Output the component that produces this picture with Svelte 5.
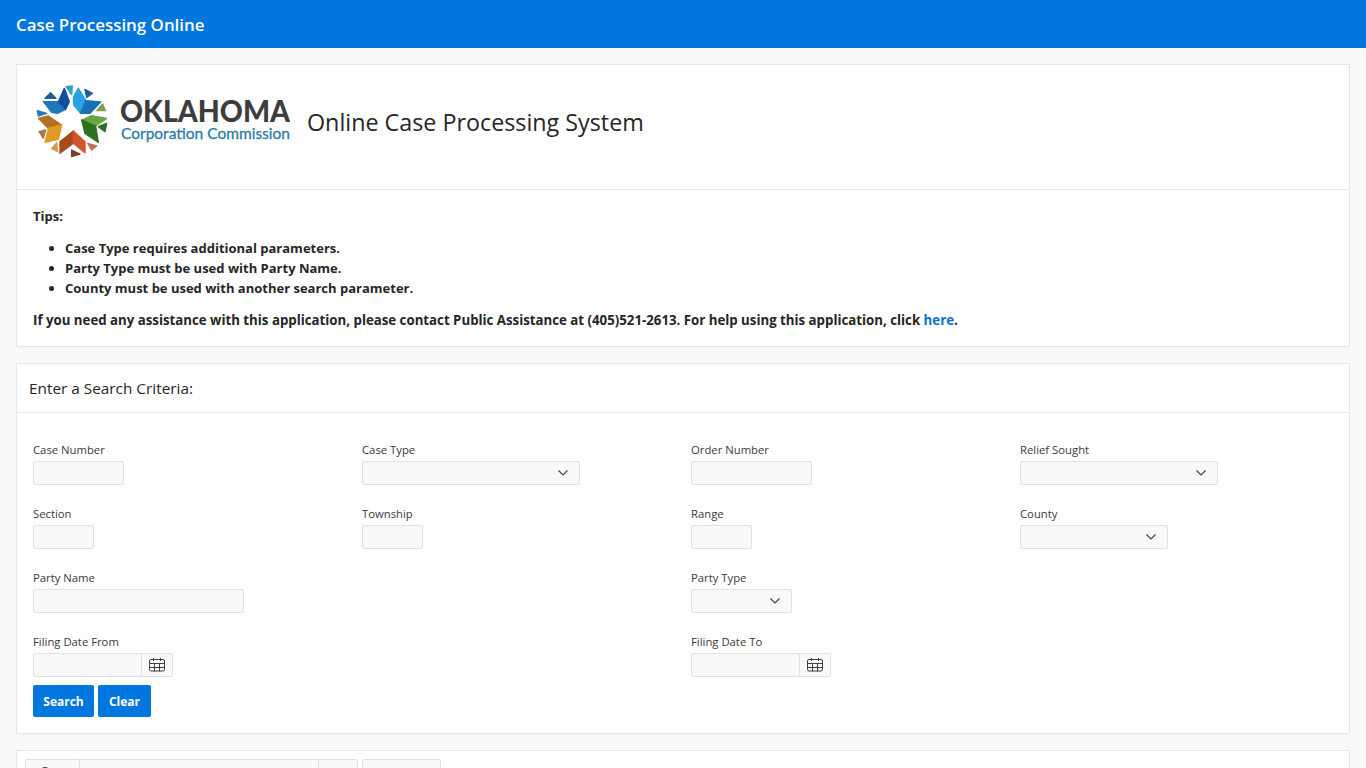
<script>
    const row1 = [
        { label: 'Case Number', kind: 'input', width: 91 },
        { label: 'Case Type', kind: 'select', width: 218 },
        { label: 'Order Number', kind: 'input', width: 121 },
        { label: 'Relief Sought', kind: 'select', width: 198 }
    ];
    const row2 = [
        { label: 'Section', kind: 'input', width: 61 },
        { label: 'Township', kind: 'input', width: 61 },
        { label: 'Range', kind: 'input', width: 61 },
        { label: 'County', kind: 'select', width: 148 }
    ];
    const fields = [...row1, ...row2];

    const logoPieces = [
        ['108,20 127,18 125,44', '#2f9fd0'],
        ['45,55 62,38 78,55', '#1c5e96'],
        ['40,65 85,65 107,88 82,100 65,97', '#1f78bb'],
        ['85,65 103,25 118,65 107,88', '#0f4f9e'],
        ['130,52 145,25 168,62 152,100 131,75', '#27a3e0'],
        ['168,62 212,66 180,100 152,100', '#1a6fb5'],
        ['165,28 187,40 170,52', '#1c5e96'],
        ['200,92 218,72 226,92', '#7f9f50'],
        ['155,120 185,107 230,115 197,138', '#6aa544'],
        ['155,120 197,138 205,187 165,160', '#2e7020'],
        ['205,140 230,130 225,155', '#2f6b28'],
        ['22,92 50,100 25,108', '#2a7ab5'],
        ['25,115 55,108 95,135 55,145', '#b0702a'],
        ['55,145 95,135 85,178 45,187', '#e09a25'],
        ['27,155 47,150 40,175', '#a07a50'],
        ['65,205 80,188 83,215', '#d89a50'],
        ['90,185 130,153 130,190 90,220', '#a84a1e'],
        ['130,153 165,185 165,218 130,190', '#d0552a'],
        ['173,190 200,198 185,210', '#c87055'],
        ['125,210 150,222 125,230', '#7a4025']
    ];
</script>

{#snippet calendar()}
    <svg class="cal" viewBox="0 0 16 14" width="16" height="14" aria-hidden="true">
        <path d="M4.5 0v3M11.5 0v3M2 1.5h12a1.5 1.5 0 0 1 1.5 1.5v8.500a1.500 1.500 0 0 1-1.500 1.500h-12a1.500 1.500 0 0 1-1.500-1.500v-8.500a1.500 1.500 0 0 1 1.500-1.500zM.5 5.500h15M.5 9.500h15M5.500 5.500v8M10.500 5.500v8" fill="none" stroke="#404040" stroke-width="1" />
    </svg>
{/snippet}

{#snippet field(f)}
    <div class="field">
        <label>{f.label}</label>
        {#if f.kind === 'select'}
            <div class="box select" style="width: {f.width}px">
                <svg viewBox="0 0 10 6" width="10" height="6" aria-hidden="true">
                    <path d="M.5.5 5 5 9.500.5" fill="none" stroke="#404040" stroke-width="1.100" />
                </svg>
            </div>
        {:else}
            <div class="box" style="width: {f.width}px"></div>
        {/if}
    </div>
{/snippet}

<header class="topbar">Case Processing Online</header>

<main class="page">
    <section class="card">
        <div class="brand">
            <svg class="logo" viewBox="0 0 780 255" width="260" height="85" role="img" aria-label="Oklahoma Corporation Commission">
                {#each logoPieces as [points, fill]}
                    <polygon {points} {fill} stroke={fill} stroke-width="4" stroke-linejoin="round" />
                {/each}
                <text x="270" y="127" font-family="Lato, sans-serif" font-weight="900" font-size="90" fill="#3d3d3f" textLength="510" lengthAdjust="spacingAndGlyphs">OKLAHOMA</text>
                <text x="273" y="177" font-family="Lato, sans-serif" font-weight="400" font-size="46" fill="#2a7ba8" stroke="#2a7ba8" stroke-width="0.800" textLength="507" lengthAdjust="spacingAndGlyphs">Corporation Commission</text>
            </svg>
            <h1>Online Case Processing System</h1>
        </div>
        <div class="tips">
            <p>Tips:</p>
            <ul>
                <li>Case Type requires additional parameters.</li>
                <li>Party Type must be used with Party Name.</li>
                <li>County must be used with another search parameter.</li>
            </ul>
            <p class="help">If you need any assistance with this application, please contact Public Assistance at (405)521-2613. For help using this application, click <a href="#help">here</a>.</p>
        </div>
    </section>

    <section class="card">
        <h2>Enter a Search Criteria:</h2>
        <div class="form">
            <div class="grid">
                {#each fields as f}
                    {@render field(f)}
                {/each}
                <div class="wide">
                    {@render field({ label: 'Party Name', kind: 'input', width: 211 })}
                </div>
                <div class="wide">
                    {@render field({ label: 'Party Type', kind: 'select', width: 101 })}
                </div>
                <div class="wide">
                    <div class="field">
                        <label>Filing Date From</label>
                        <div class="date"><div class="box"></div><span class="cal-btn">{@render calendar()}</span></div>
                    </div>
                </div>
                <div class="wide">
                    <div class="field">
                        <label>Filing Date To</label>
                        <div class="date"><div class="box"></div><span class="cal-btn">{@render calendar()}</span></div>
                    </div>
                </div>
            </div>
            <div class="actions">
                <button class="search-btn">Search</button>
                <button class="clear-btn">Clear</button>
            </div>
        </div>
    </section>

    <section class="card results">
        <div class="toolbar">
            <span class="tb icon">
                <svg viewBox="0 0 14 14" width="14" height="14" aria-hidden="true">
                    <circle cx="6" cy="6" r="4.500" fill="none" stroke="#404040" stroke-width="1.200" />
                    <path d="M9.500 9.500 13 13" stroke="#404040" stroke-width="1.200" />
                </svg>
            </span>
            <span class="tb search"></span>
            <span class="tb go"></span>
            <span class="tb actions-btn"></span>
        </div>
    </section>
</main>

<style>
    :global(html), :global(body) {
        height: 768px;
        overflow: hidden;
    }

    :global(body) {
        background: #fafafa;
        color: #262626;
        font-family: "Open Sans", sans-serif;
    }

    .topbar {
        height: 48px;
        padding: 0 16px;
        background: #0076df;
        color: #fff;
        font-size: 16.900px;
        font-weight: 600;
        line-height: 50px;
    }

    .page {
        display: flex;
        flex-direction: column;
        gap: 16px;
        padding: 16px;
    }

    .card {
        background: #fff;
        border: 1px solid #e6e6e6;
        box-shadow: 0 2px 4px -2px rgba(0, 0, 0, 0.075);
    }

    .brand {
        display: flex;
        align-items: center;
        gap: 17px;
        height: 114px;
        padding: 0 0 10px 13px;
        border-bottom: 1px solid #e6e6e6;
    }

    .logo {
        flex: none;
    }

    h1 {
        margin: 0;
        font-size: 23.300px;
        font-weight: 400;
        line-height: 32px;
    }

    .tips {
        padding: 16px;
        font-size: 13px;
        font-weight: 700;
        line-height: 20px;
    }

    .tips p {
        margin: 0;
    }

    .tips .help {
        font-size: 13.250px;
    }

    .tips ul {
        margin: 12px 0;
        padding-left: 32px;
    }

    .tips a {
        color: #0572ce;
        text-decoration: none;
    }

    h2 {
        margin: 0;
        padding: 12px;
        height: 24px;
        font-size: 15.350px;
        font-weight: 400;
        line-height: 24px;
        border-bottom: 1px solid #e6e6e6;
    }

    .form {
        padding: 28px 16px 16px;
    }

    .grid {
        display: grid;
        grid-template-columns: repeat(4, 329px);
        row-gap: 20px;
    }

    .wide {
        grid-column: span 2;
    }

    .field {
        display: flex;
        flex-direction: column;
    }

    label {
        height: 18px;
        margin-bottom: 2px;
        color: #3a3a3a;
        font-size: 11.300px;
        line-height: 18px;
    }

    .box {
        display: flex;
        align-items: center;
        justify-content: flex-end;
        box-sizing: border-box;
        height: 24px;
        background: #f9f9f9;
        border: 1px solid #e0e0e0;
        border-radius: 2px;
    }

    .select {
        padding-right: 11px;
    }

    .date {
        display: flex;
    }

    .date .box {
        width: 109px;
        border-radius: 2px 0 0 2px;
    }

    .cal-btn {
        display: flex;
        align-items: center;
        justify-content: center;
        box-sizing: border-box;
        width: 31px;
        height: 24px;
        background: #f9f9f9;
        border: 1px solid #e0e0e0;
        border-left: 0;
        border-radius: 0 2px 2px 0;
    }

    .actions {
        display: flex;
        gap: 4px;
        margin-top: 8px;
    }

    button {
        height: 32px;
        padding: 0;
        background: #0076df;
        color: #fff;
        border: 0;
        border-radius: 2px;
        font-family: "Open Sans", sans-serif;
        font-size: 12px;
        font-weight: 700;
    }

    .search-btn {
        width: 61px;
    }

    .clear-btn {
        width: 53px;
    }

    .results {
        height: 200px;
        padding: 8px;
    }

    .toolbar {
        display: flex;
    }

    .tb {
        box-sizing: border-box;
        height: 32px;
        background: #f9f9f9;
        border: 1px solid #e0e0e0;
    }

    .icon {
        display: flex;
        justify-content: center;
        width: 55px;
        padding: 6px 14px 0 0;
        border-radius: 2px 0 0 2px;
    }

    .search {
        width: 239px;
        border-left: 0;
    }

    .go {
        width: 39px;
        border-left: 0;
        border-radius: 0 2px 2px 0;
    }

    .actions-btn {
        width: 79px;
        margin-left: 4px;
        border-radius: 2px;
    }
</style>
